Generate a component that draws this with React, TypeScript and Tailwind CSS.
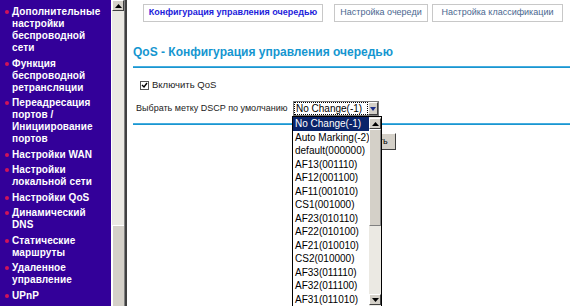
const menu: string[][] = [
  ['Дополнительные', 'настройки', 'беспроводной', 'сети'],
  ['Функция', 'беспроводной', 'ретрансляции'],
  ['Переадресация', 'портов /', 'Инициирование', 'портов'],
  ['Настройки WAN'],
  ['Настройки', 'локальной сети'],
  ['Настройки QoS'],
  ['Динамический', 'DNS'],
  ['Статические', 'маршруты'],
  ['Удаленное', 'управление'],
  ['UPnP'],
]

const options = [
  'No Change(-1)',
  'Auto Marking(-2)',
  'default(000000)',
  'AF13(001110)',
  'AF12(001100)',
  'AF11(001010)',
  'CS1(001000)',
  'AF23(010110)',
  'AF22(010100)',
  'AF21(010010)',
  'CS2(010000)',
  'AF33(011110)',
  'AF32(011100)',
  'AF31(011010)',
]

const font = { fontFamily: '"Liberation Sans", Arial, sans-serif' }

function ArrowBtn({ down = false }: { down?: boolean }) {
  return (
    <div className="w-full h-[11px] shrink-0 bg-[#d4d0c8] border-t border-l border-t-white border-l-white border-b border-r border-b-[#404040] border-r-[#404040] flex items-center justify-center">
      <svg width="7" height="4" viewBox="0 0 7 4">
        {down ? (
          <polygon points="0,0 7,0 3.5,4" fill="#000" />
        ) : (
          <polygon points="0,4 7,4 3.5,0" fill="#000" />
        )}
      </svg>
    </div>
  )
}

function Sidebar() {
  return (
    <div className="flex h-full shrink-0">
      <div className="w-[111px] h-full bg-[#330099] flex flex-col pt-[6px] gap-[3.5px]">
        {menu.map((item, i) => (
          <div key={i} className="flex">
            <div className="w-[12px] shrink-0 flex justify-center pt-[4px] pl-[1px]">
              <div className="w-[4px] h-[4px] rounded-full bg-[#d1135a]" />
            </div>
            <div className="text-white font-bold text-[10px] leading-[12px] whitespace-nowrap tracking-[0.1px]" style={font}>
              {item.map((l, j) => (
                <div key={j}>{l}</div>
              ))}
            </div>
          </div>
        ))}
        <div className="mt-[1px] h-[2px] w-[105px] bg-[#1a9bd7]" />
      </div>
      <div className="w-[13px] h-full flex flex-col border-l border-l-white bg-[#ebe9e3]">
        <ArrowBtn />
        <div className="flex-1" />
        <div className="h-[81px] bg-[#d4d0c8] border-t border-l border-t-white border-l-white" />
      </div>
      <div className="w-px h-full bg-[#808080]" />
      <div className="w-[2px] h-full bg-[#404040]" />
    </div>
  )
}

function Dropdown() {
  return (
    <div className="absolute left-[165px] top-[116px] w-[90px] h-[200px] bg-white border border-black flex">
      <div className="flex-1 flex flex-col text-[10px] text-black" style={font}>
        {options.map((o, i) => (
          <div
            key={o}
            className={`h-[13.5px] leading-[13.5px] pl-[2px] whitespace-nowrap ${
              i === 0 ? 'bg-[#0a246a] text-white' : ''
            }`}
          >
            {o}
          </div>
        ))}
      </div>
      <div className="w-[12px] flex flex-col bg-[#ebe9e3] pt-[1px]">
        <ArrowBtn />
        <div className="h-[97px] shrink-0 bg-[#d4d0c8] border-t border-l border-t-white border-l-white border-b border-r border-b-[#808080] border-r-[#808080]" />
        <div className="h-[68px] shrink-0" />
        <ArrowBtn down />
      </div>
    </div>
  )
}

export default function App() {
  return (
    <div className="w-[570px] h-[306px] overflow-hidden flex bg-white" style={font}>
      <Sidebar />
      <div className="relative flex-1 flex flex-col">
        <div className="flex pt-[4px] pl-[16px]">
          <div className="w-[180px] h-[18px] border border-[#c8c8c8] flex items-center justify-center text-[9px] font-bold text-[#1d1ddb]">
            Конфигурация управления очередью
          </div>
          <div className="ml-[11px] w-[94px] h-[18px] border border-[#c8c8c8] flex items-center justify-center text-[9px] text-[#4a6790]">
            Настройка очереди
          </div>
          <div className="ml-[4px] w-[131px] h-[18px] border border-[#c8c8c8] flex items-center justify-center text-[9px] text-[#4a6790]">
            Настройка классификации
          </div>
        </div>

        <div className="mt-[23px] pl-[6px] text-[12px] leading-[14px] font-bold text-[#1596d0] whitespace-nowrap">
          QoS - Конфигурация управления очередью
        </div>
        <div className="mt-[7px] ml-[6px] h-[2px] bg-[#1b96cf] border-t border-t-[#45ade0]" />

        <div className="mt-[11px] pl-[13px] flex items-center h-[12px] gap-[2px] text-[9.5px] text-[#222]">
          <div className="w-[9px] h-[9px] border border-[#555] bg-white flex items-center justify-center">
            <svg width="7" height="7" viewBox="0 0 7 7">
              <polyline points="1,3 3,5 6,1" fill="none" stroke="#000" strokeWidth="1.4" />
            </svg>
          </div>
          <span className="ml-[1px]">Включить QoS</span>
        </div>

        <div className="mt-[10px] pl-[9px] flex items-center h-[15px] text-[9px] text-[#222]">
          <span className="w-[157px] shrink-0 whitespace-nowrap">Выбрать метку DSCP по умолчанию</span>
          <div className="w-[86px] shrink-0 h-[15px] border border-[#7a7a7a] bg-white flex items-center">
            <div className="flex-1 h-full border border-dotted border-black flex items-center pl-[1px] text-black text-[10px] whitespace-nowrap">
              No Change(-1)
            </div>
            <div className="w-[10px] h-full">
              <div className="h-full bg-[#d4d0c8] border-l border-t border-l-white border-t-white border-r border-b border-r-[#404040] border-b-[#404040] flex items-center justify-center">
                <svg width="6" height="4" viewBox="0 0 6 4">
                  <polygon points="0,0 6,0 3,4" fill="#1c2f8c" />
                </svg>
              </div>
            </div>
          </div>
        </div>

        <div className="mt-[7px] ml-[6px] h-[2px] bg-[#1b96cf] border-t border-t-[#45ade0]" />

        <div className="mt-[8px] flex">
          <div className="ml-[206px] w-[63px] h-[17px] bg-[#d4d0c8] border-t border-l border-t-white border-l-white border-b border-r border-b-[#404040] border-r-[#404040] flex items-center justify-center text-[9px] text-black">
            Применить
          </div>
        </div>

        <Dropdown />
      </div>
    </div>
  )
}
